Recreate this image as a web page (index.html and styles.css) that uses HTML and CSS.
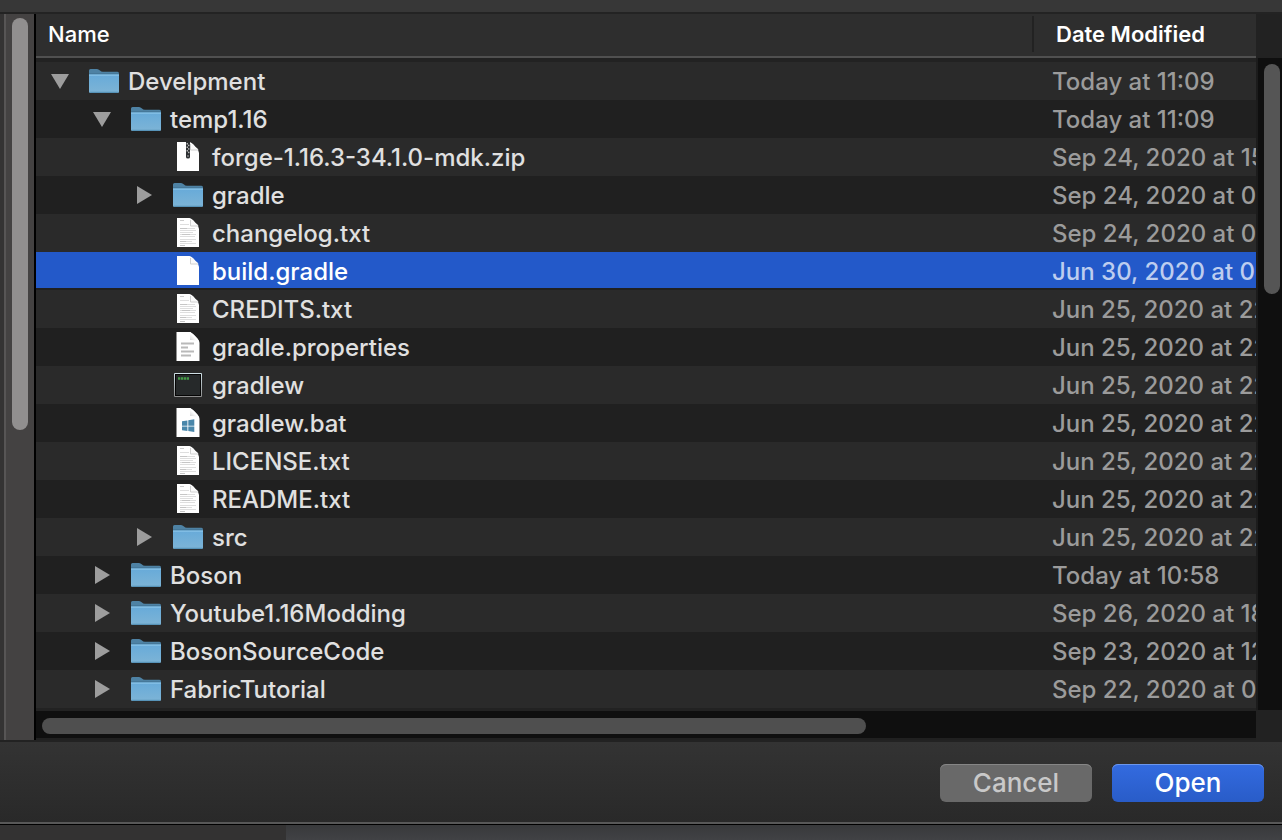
FILE: index.html
```html
<!DOCTYPE html>
<html lang="en">
<head>
<meta charset="utf-8">
<title>Open</title>
<link rel="stylesheet" href="styles.css">
</head>
<body>
<svg class="defs" aria-hidden="true">
  <defs>
    <linearGradient id="folder-face" x1="0" y1="0" x2="0" y2="1">
      <stop offset="0" stop-color="#67aad9"/><stop offset="1" stop-color="#7db4d6"/>
    </linearGradient>
    <linearGradient id="term-frame" x1="0" y1="0" x2="0" y2="1">
      <stop offset="0" stop-color="#cfe0e6"/><stop offset="1" stop-color="#8c8c8c"/>
    </linearGradient>
    <linearGradient id="fold" x1="0" y1="1" x2="1" y2="0">
      <stop offset="0" stop-color="#c4c4c4"/><stop offset="0.5" stop-color="#ffffff"/>
    </linearGradient>
    <symbol id="folder" viewBox="0 0 32 30">
      <path d="M1 6V4.500Q1 3 2.500 3H9Q10.500 3 12 4.500Q13 5.800 15 5.800H29.500Q31 5.800 31 7.500V10H1Z" fill="#4e82a4"/>
      <path d="M1 7.500H31V9H1Z" fill="#3f6f8f"/>
      <path d="M1 8.500H31V25.500Q31 27 29.500 27H2.500Q1 27 1 25.500Z" fill="url(#folder-face)"/>
      <path d="M1 8.500H31V9.700H1Z" fill="#8bc4e8"/>
      <path d="M1.500 25.800H30.500Q30 27 29 27H3Q2 27 1.500 25.800Z" fill="#5793b8"/>
    </symbol>
    <symbol id="page" viewBox="0 0 32 30">
      <path d="M5 0H17.500Q20 0.500 23.500 5Q27 8 27 11V29H5Z" fill="#fff"/>
      <path d="M18.500 1V8H26.500Q26 6.500 23.500 5Q21 1.500 18.500 1Z" fill="#fafafa"/>
      <path d="M18.500 2V8H26" fill="none" stroke="#d0d0d0"/>
    </symbol>
    <symbol id="big-page" viewBox="0 0 32 30">
      <path d="M4.500 -0.500H16.500Q19 -0.500 23.500 4.500Q27.500 8 27.500 11V29H4.500Z" fill="#fff"/>
      <path d="M17 0Q18.500 2 18 8Q25 7.500 27 10Q27 8 23.500 4.500Q19.500 0 17 0Z" fill="url(#fold)"/>
    </symbol>
    <symbol id="zip" viewBox="0 0 32 30">
      <use href="#page"/>
      <path d="M14 0H18V15Q18 16.500 16 16.500Q14 16.500 14 15Z" fill="#2c2f31"/>
      <path d="M15.200 1V11.500" stroke="#eee" stroke-dasharray="1.500 2"/>
      <path d="M16.800 2.700V12" stroke="#eee" stroke-dasharray="1.500 2"/>
      <path d="M15.500 13H16.500V15H15.500Z" fill="#aaa"/>
    </symbol>
    <symbol id="text" viewBox="0 0 32 30">
      <use href="#page"/>
      <path d="M8 2.500H12" stroke="#ccc"/>
      <path d="M8 6.500H17M8 10.500H23M8 12.500H24M8 14.500H21M8 16.500H24M8 18.500H23M8 21.500H24M8 23.500H20M8 25.500H24" stroke="#dedede"/>
      <path d="M8 10.500H15M10 16.500H18M8 23.500H14M8 27.500H13" stroke="#c6c6c6"/>
    </symbol>
    <symbol id="props" viewBox="0 0 32 30">
      <use href="#big-page"/>
      <path d="M9 11.500H22M9 15.500H16M9 19.500H22M9 23.500H19" stroke="#b9b9b9" stroke-width="1.800"/>
    </symbol>
    <symbol id="terminal" viewBox="0 0 32 30">
      <rect x="2" y="3" width="28" height="24" rx="1" fill="url(#term-frame)"/>
      <rect x="3" y="4" width="26" height="22" fill="#050505"/>
      <rect x="4" y="5" width="24" height="20" fill="#26292a"/>
      <path d="M6 8.500H17" stroke="#459a48" stroke-width="2.400" stroke-dasharray="2.300 0.600"/>
    </symbol>
    <symbol id="bat" viewBox="0 0 32 30">
      <use href="#big-page"/>
      <path d="M10 13.300L15.400 12.400V17.700H10ZM16.300 12.200L22.300 11.200V17.700H16.300ZM10 18.500H15.400V22.900L10 22.200ZM16.300 18.500H22.300V24L16.300 23.100Z" fill="#4a87aa"/>
    </symbol>
    <symbol id="down" viewBox="0 0 20 20"><path d="M1 3H19L10 18Z" fill="#9d9d9d"/></symbol>
    <symbol id="right" viewBox="0 0 20 20"><path d="M3 1L18 10L3 19Z" fill="#9d9d9d"/></symbol>
  </defs>
</svg>
<div class="titlebar"></div>
<main class="browser">
  <div class="side-track"><div class="thumb side-thumb"></div></div>
  <div class="list">
    <table class="files">
      <colgroup><col><col class="date-col"></colgroup>
      <thead>
        <tr><th scope="col" class="name-head">Name</th><th scope="col" class="date-head"><span>Date Modified</span></th></tr>
      </thead>
      <tbody>
        <tr><td><div class="entry"><button class="toggle" aria-label="Collapse Develpment"><svg><use href="#down"/></svg></button><svg class="icon"><use href="#folder"/></svg>Develpment</div></td><td class="date">Today at 11:09</td></tr>
        <tr><td><div class="entry level-1"><button class="toggle" aria-label="Collapse temp1.16"><svg><use href="#down"/></svg></button><svg class="icon"><use href="#folder"/></svg>temp1.16</div></td><td class="date">Today at 11:09</td></tr>
        <tr><td><div class="entry level-2 leaf"><svg class="icon"><use href="#zip"/></svg>forge-1.16.3-34.1.0-mdk.zip</div></td><td class="date">Sep 24, 2020 at 15</td></tr>
        <tr><td><div class="entry level-2"><button class="toggle" aria-label="Expand gradle"><svg><use href="#right"/></svg></button><svg class="icon"><use href="#folder"/></svg>gradle</div></td><td class="date">Sep 24, 2020 at 07</td></tr>
        <tr><td><div class="entry level-2 leaf"><svg class="icon"><use href="#text"/></svg>changelog.txt</div></td><td class="date">Sep 24, 2020 at 07</td></tr>
        <tr class="selected"><td><div class="entry level-2 leaf"><svg class="icon"><use href="#page"/></svg>build.gradle</div></td><td class="date">Jun 30, 2020 at 02</td></tr>
        <tr><td><div class="entry level-2 leaf"><svg class="icon"><use href="#text"/></svg>CREDITS.txt</div></td><td class="date">Jun 25, 2020 at 22</td></tr>
        <tr><td><div class="entry level-2 leaf"><svg class="icon"><use href="#props"/></svg>gradle.properties</div></td><td class="date">Jun 25, 2020 at 22</td></tr>
        <tr><td><div class="entry level-2 leaf"><svg class="icon"><use href="#terminal"/></svg>gradlew</div></td><td class="date">Jun 25, 2020 at 22</td></tr>
        <tr><td><div class="entry level-2 leaf"><svg class="icon"><use href="#bat"/></svg>gradlew.bat</div></td><td class="date">Jun 25, 2020 at 22</td></tr>
        <tr><td><div class="entry level-2 leaf"><svg class="icon"><use href="#text"/></svg>LICENSE.txt</div></td><td class="date">Jun 25, 2020 at 22</td></tr>
        <tr><td><div class="entry level-2 leaf"><svg class="icon"><use href="#text"/></svg>README.txt</div></td><td class="date">Jun 25, 2020 at 22</td></tr>
        <tr><td><div class="entry level-2"><button class="toggle" aria-label="Expand src"><svg><use href="#right"/></svg></button><svg class="icon"><use href="#folder"/></svg>src</div></td><td class="date">Jun 25, 2020 at 22</td></tr>
        <tr><td><div class="entry level-1"><button class="toggle" aria-label="Expand Boson"><svg><use href="#right"/></svg></button><svg class="icon"><use href="#folder"/></svg>Boson</div></td><td class="date">Today at 10:58</td></tr>
        <tr><td><div class="entry level-1"><button class="toggle" aria-label="Expand Youtube1.16Modding"><svg><use href="#right"/></svg></button><svg class="icon"><use href="#folder"/></svg>Youtube1.16Modding</div></td><td class="date">Sep 26, 2020 at 18</td></tr>
        <tr><td><div class="entry level-1"><button class="toggle" aria-label="Expand BosonSourceCode"><svg><use href="#right"/></svg></button><svg class="icon"><use href="#folder"/></svg>BosonSourceCode</div></td><td class="date">Sep 23, 2020 at 12</td></tr>
        <tr><td><div class="entry level-1"><button class="toggle" aria-label="Expand FabricTutorial"><svg><use href="#right"/></svg></button><svg class="icon"><use href="#folder"/></svg>FabricTutorial</div></td><td class="date">Sep 22, 2020 at 0</td></tr>
      </tbody>
    </table>
    <div class="h-track"><div class="thumb h-thumb"></div></div>
  </div>
  <div class="v-bar">
    <div class="v-track"><div class="thumb v-thumb"></div></div>
  </div>
</main>
<footer class="actions">
  <button class="btn">Cancel</button>
  <button class="btn primary">Open</button>
</footer>
<div class="backdrop"><div class="backdrop-left"></div></div>
</body>
</html>
```

FILE: styles.css
```css
* { box-sizing: border-box; }

body {
  margin: 0;
  min-height: 100vh;
  display: flex;
  flex-direction: column;
  overflow: hidden;
  background: #38383a;
  color: #e0e0e0;
  font: 450 24px/28px Inter, "Liberation Sans", sans-serif;
}

button { font: inherit; border: 0; }

.defs { position: absolute; width: 0; height: 0; }

.titlebar {
  height: 14px;
  background: #373737;
  border-bottom: 2px solid #232323;
}

.browser {
  display: flex;
  background: #222;
}

.thumb { border-radius: 8px; background: #4f4f4f; }

.side-track {
  width: 32px;
  margin-left: 4px;
  padding: 4px 6px;
  background: #444242;
  border-left: 2px solid #575555;
  border-right: 2px solid #000;
  box-shadow: -4px 0 #343333;
}

.side-thumb {
  width: 16px;
  height: 57.4%;
  background: #918f8f;
}

.list {
  flex: 1;
  min-width: 0;
}

.files {
  width: 100%;
  table-layout: fixed;
  border-collapse: separate;
  border-spacing: 0;
}

.date-col { width: 224px; }

th {
  height: 44px;
  padding: 0;
  background: #2e2e2e;
  border-bottom: 2px solid #505050;
  color: #fff;
  font-size: 22px;
  text-align: left;
}

.name-head { padding: 0 0 2px 12px; font-weight: 500; }
.date-head { font-weight: 600; }

.date-head span {
  display: block;
  margin-bottom: 2px;
  padding: 4px 0 4px 22px;
  border-left: 2px solid #222;
}

tbody::before {
  content: "";
  display: block;
  height: 4px;
  background: #222;
}

td {
  height: 38px;
  padding: 2px 0 0;
  overflow: hidden;
  white-space: nowrap;
}

tbody tr:nth-child(odd) td { background: #2a2a2a; }
tbody tr:nth-child(even) td { background: #202020; }

tbody tr.selected td {
  background: #2359c9;
  box-shadow: inset 0 -2px #202020;
  color: #fff;
}

.entry {
  display: flex;
  align-items: center;
  padding-left: 14px;
}

.level-1 { padding-left: 56px; }
.level-2 { padding-left: 98px; }
.leaf { padding-left: 136px; }

.toggle {
  width: 20px;
  height: 20px;
  margin: 0 18px 2px 0;
  padding: 0;
  background: none;
}

.toggle svg { display: block; width: 20px; height: 20px; }

.icon {
  flex: none;
  width: 32px;
  height: 30px;
  margin: 0 8px 2px 0;
}

.date { padding-left: 20px; color: #9b9b9b; }
tbody tr.selected .date { color: #bdcdef; }

.h-track {
  height: 32px;
  padding: 7px 6px;
  background: #0f0f0f;
  border-top: 3px solid #222;
  border-bottom: 2px solid #202020;
}

.h-thumb { width: 68.2%; height: 16px; }

.v-bar {
  width: 26px;
  padding: 44px 0 30px;
  background: #222;
}

.v-track {
  height: 100%;
  padding: 6px;
  background: #0f0f0f;
  border-left: 2px solid #1c1c1c;
}

.v-thumb { width: 16px; height: 36%; background: #555; }

.actions {
  display: flex;
  justify-content: flex-end;
  gap: 20px;
  padding: 22px 18px 20px;
  background: linear-gradient(#333, #292929);
  border-top: 2px solid #222;
  border-bottom: 2px solid #585858;
}

.btn {
  width: 152px;
  height: 38px;
  padding: 0;
  border-radius: 6px;
  background: #696969;
  box-shadow: inset 0 1px #868686;
  color: #c9c9c9;
  font-size: 26px;
}

.primary {
  background: linear-gradient(#336be0, #295cc8);
  box-shadow: inset 0 1px #6c97ec;
  color: #fff;
}

.backdrop {
  flex: 1;
  border-top: 1px solid #000;
  background: linear-gradient(#38393b, #414245);
}

.backdrop-left {
  width: 286px;
  height: 100%;
  min-height: 15px;
  background: #333232;
}
```
